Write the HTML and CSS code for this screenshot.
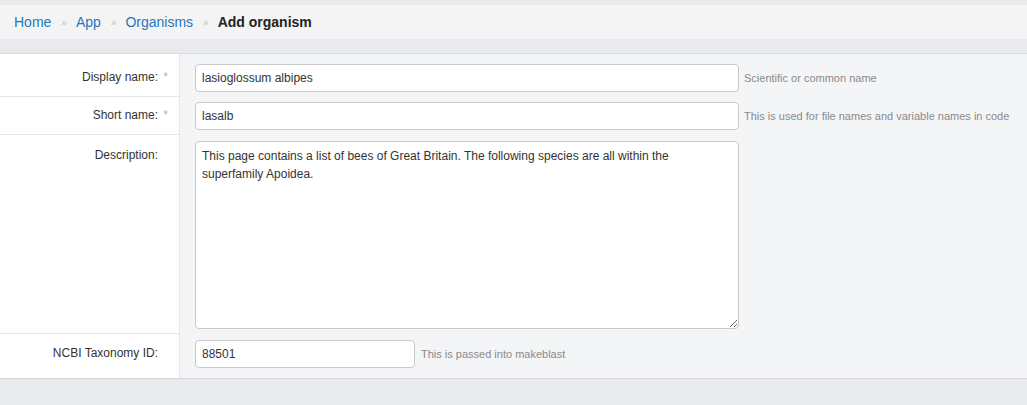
FILE: index.html
```html
<!DOCTYPE html>
<html>
<head>
<meta charset="utf-8">
<link rel="stylesheet" href="styles.css">
</head>
<body>
<div class="page">
  <nav class="crumbs">
    <a href="#">Home</a><span class="sep">»</span>
    <a href="#">App</a><span class="sep">»</span>
    <a href="#">Organisms</a><span class="sep">»</span>
    <span class="current">Add organism</span>
  </nav>
  <form class="form">
    <div class="row row-first">
      <label class="lbl">Display name:<span class="req">*</span></label>
      <div class="fld">
        <input class="inp wide" type="text" value="lasioglossum albipes">
        <span class="help">Scientific or common name</span>
      </div>
    </div>
    <div class="row">
      <label class="lbl">Short name:<span class="req">*</span></label>
      <div class="fld">
        <input class="inp wide" type="text" value="lasalb">
        <span class="help">This is used for file names and variable names in code</span>
      </div>
    </div>
    <div class="row row-desc">
      <label class="lbl">Description:<span class="req"></span></label>
      <div class="fld">
        <textarea class="txt">This page contains a list of bees of Great Britain. The following species are all within the superfamily Apoidea.</textarea>
      </div>
    </div>
    <div class="row row-last">
      <label class="lbl">NCBI Taxonomy ID:<span class="req"></span></label>
      <div class="fld">
        <input class="inp narrow" type="text" value="88501">
        <span class="help help-narrow">This is passed into makeblast</span>
      </div>
    </div>
  </form>
</div>
</body>
</html>
```

FILE: styles.css
```css
html, body {
  margin: 0;
  padding: 0;
  background: #e9eaed;
  font-family: "Liberation Sans", Arial, Helvetica, sans-serif;
  color: #333;
}

.page {
  padding-top: 5px;
}

.crumbs {
  height: 34px;
  background: #f4f4f5;
  display: flex;
  align-items: center;
  padding-left: 14px;
  font-size: 14px;
}

.crumbs a {
  color: #2477c0;
  text-decoration: none;
}

.crumbs .sep {
  color: #c2c2c2;
  font-size: 10px;
  margin: 0 9px 0 10px;
}

.crumbs .current {
  font-weight: bold;
  color: #222;
}

.form {
  margin-top: 14px;
  border-top: 1px solid #dcdcdf;
  border-bottom: 1px solid #d6d6d9;
  background: #f4f5f7;
}

.row {
  display: flex;
}

.lbl {
  width: 168px;
  flex: none;
  box-sizing: content-box;
  padding-right: 11px;
  background: #fff;
  border-right: 1px solid #e6e6e8;
  border-bottom: 1px solid #e6e6e8;
  text-align: right;
  font-size: 12px;
  line-height: 17px;
  padding-top: 10px;
  color: #333;
}

.row-last .lbl {
  border-bottom: none;
}

.req {
  display: inline-block;
  width: 10px;
  text-align: right;
  color: #b5b5b5;
}

.fld {
  flex: 1;
  display: flex;
  align-items: flex-start;
  padding: 5px 0 5px 15px;
}

.row-first .fld { padding-top: 10px; }
.row-first .lbl { padding-top: 15px; }

.row-desc .fld { padding-top: 6px; padding-bottom: 5px; }
.row-desc .lbl { padding-top: 12px; }

.row-last .fld { padding-top: 6px; padding-bottom: 10px; }
.row-last .lbl { padding-top: 11px; }

.inp, .txt {
  box-sizing: border-box;
  border: 1px solid #c9c9cc;
  border-radius: 4px;
  background: #fff;
  font-family: "Liberation Sans", Arial, Helvetica, sans-serif;
  font-size: 12px;
  color: #333;
  padding: 0 6px;
  margin: 0;
  outline: none;
}

.inp {
  height: 28px;
}

.wide {
  width: 544px;
}

.narrow {
  width: 220px;
}

.txt {
  display: block;
  width: 544px;
  height: 188px;
  padding: 5px 6px;
  line-height: 18px;
  resize: vertical;
}

.help {
  font-size: 11px;
  color: #8a8a8a;
  margin-left: 5px;
  line-height: 28px;
}

.help-narrow {
  margin-left: 6px;
}
```
